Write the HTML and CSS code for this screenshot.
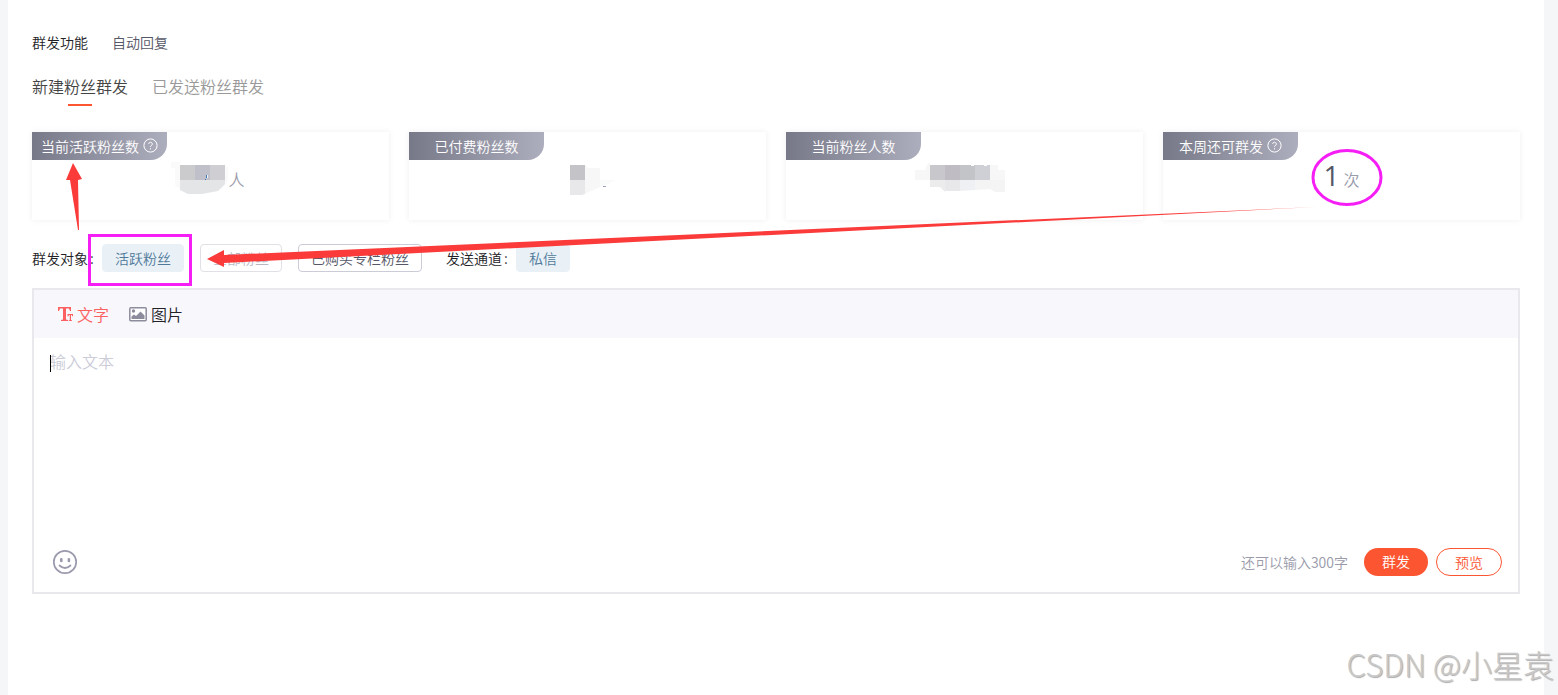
FILE: index.html
```html
<!DOCTYPE html>
<html lang="zh-CN">
<head>
<meta charset="utf-8">
<title>群发功能</title>
<link rel="stylesheet" href="styles.css">
</head>
<body>
<main class="page">
  <nav class="nav">
    <a class="nav-link nav-link-active" href="#">群发功能</a>
    <a class="nav-link" href="#">自动回复</a>
  </nav>
  <div class="tabs">
    <button class="tab tab-active" type="button">新建粉丝群发</button>
    <button class="tab" type="button">已发送粉丝群发</button>
  </div>

  <section class="cards">
    <article class="card">
      <h2 class="card-label">当前活跃粉丝数
        <svg class="help" viewBox="0 0 15 15"><circle cx="7.5" cy="7.5" r="6.6"/><path d="M5.7 6a1.800 1.800 0 1 1 2.700 1.600c-.7.4-.9.700-.9 1.300M7.500 10.200v1.200"/></svg>
      </h2>
      <p class="card-value">
        <svg class="mosaic" width="52" height="30" viewBox="0 0 52 30">
          <path fill="#fafafa" d="M-5-3H4V0H49l3 3v12l-6 9H4L-1 20V3h-4z"/>
          <path fill="#cbcbcd" d="M4 0h15v15H4z"/><path fill="#c0c0ca" d="M19 0h15v15H19z"/><path fill="#cfced3" d="M34 0h15v15H34z"/>
          <path fill="#e4e5e7" d="M4 15h45v4l-7 7-16 3H12l-8-4z"/>
          <path fill="#3f78b8" d="M30 10h1v3h-1zM29 14h1v1h-1z"/><path fill="#eef6fa" d="M31 10h1v3h-1z"/>
        </svg><span class="unit">人</span>
      </p>
    </article>
    <article class="card">
      <h2 class="card-label">已付费粉丝数</h2>
      <p class="card-value">
        <svg class="mosaic" width="36" height="30" viewBox="0 0 36 30">
          <path fill="#c4c3c8" d="M0 0h15v15H0z"/><path fill="#e8e8ea" d="M0 15h15v14l-3 1H0z"/>
          <path fill="#f7f7f7" d="M15 0l3 3h12v19l-15 7z"/><path fill="#f9fbfb" d="M30 15h15l-7 4-8 3z"/>
          <path fill="#9a9dc0" d="M33 21h3v1h-3z"/>
        </svg>
      </p>
    </article>
    <article class="card">
      <h2 class="card-label">当前粉丝人数</h2>
      <p class="card-value">
        <svg class="mosaic" width="100" height="30" viewBox="0 0 100 30">
          <path fill="#f7f7f7" d="M0 5h10l3-7h2v17H0zM75 0h8v5h7v10H75z"/>
          <path fill="#c8c7cc" d="M15 0h15v15H15z"/><path fill="#bfbdc3" d="M30 0h15v15H30z"/><path fill="#c3c4c8" d="M45 0h15v15H45z"/><path fill="#cfd0d6" d="M60 0h15v15H60z"/>
          <path fill="#ececec" d="M15 15h15v12l-5-5H15z"/><path fill="#e8e8ea" d="M30 15h15v11H30z"/><path fill="#eff0f3" d="M45 15h15v10l-15 1z"/><path fill="#f4f4f5" d="M60 15h30v12H80l-5-3-15 1z"/>
          <path fill="#fff" d="M56 0h3v1h-3zM69 0h3v1h-3z"/>
        </svg>
      </p>
    </article>
    <article class="card">
      <h2 class="card-label">本周还可群发
        <svg class="help" viewBox="0 0 15 15"><circle cx="7.5" cy="7.5" r="6.6"/><path d="M5.7 6a1.800 1.800 0 1 1 2.700 1.600c-.7.4-.9.700-.9 1.300M7.500 10.200v1.200"/></svg>
      </h2>
      <p class="card-value"><span class="number">1</span><span class="unit">次</span></p>
    </article>
  </section>

  <section class="filters">
    <span class="filter-label">群发对象<span class="colon">:</span></span>
    <div class="chips">
      <button class="chip chip-active" type="button">活跃粉丝</button>
      <button class="chip chip-disabled" type="button" disabled>全部粉丝</button>
      <button class="chip" type="button">已购买专栏粉丝</button>
    </div>
    <span class="filter-label channel-label">发送通道<span class="colon">:</span></span>
    <button class="chip chip-active" type="button">私信</button>
  </section>

  <section class="editor">
    <div class="toolbar">
      <button class="tool tool-active" type="button">
        <svg width="16" height="16" viewBox="0 0 16 16"><path fill="currentColor" d="M0 1h13v4h-1l-1-2.500H8V13.500l2 .5v1H3v-1l2-.5V2.500H2L1 5H0zM9.500 8H15v2.300h-.7L13.700 9H13v5l1 .2v.8h-3.200v-.8l1-.2V9h-.8l-.6 1.300h-.9z"/></svg>
        <span class="tool-text">文字</span>
      </button>
      <button class="tool" type="button">
        <svg width="18" height="15" viewBox="0 0 18 15"><rect x=".8" y=".8" width="16.400" height="13" rx="1" fill="#fff" stroke="#8c8c9c" stroke-width="1.500"/><circle cx="4.500" cy="4" r="1.700" fill="#8c8c9c"/><path fill="#8c8c9c" d="M2.500 12V9.500L5 7.500l2 1.500 4.500-4.500 4 4V12z"/></svg>
        <span class="tool-text">图片</span>
      </button>
    </div>
    <div class="entry">
      <textarea class="input" placeholder="输入文本" aria-label="输入文本"></textarea>
      <span class="caret"></span>
    </div>
    <div class="footer">
      <button class="emoji" type="button" aria-label="表情">
        <svg width="26" height="26" viewBox="0 0 26 26" fill="none" stroke="#9a9aad" stroke-linecap="round"><circle cx="13" cy="13" r="11.200" stroke-width="1.700"/><path stroke-width="2.600" d="M9.300 10.200v1.800M16.900 10.200v1.800"/><path stroke-width="1.700" d="M7.500 16.500q5.500 5 11 0"/></svg>
      </button>
      <span class="remaining">还可以输入300字</span>
      <button class="action action-primary" type="button">群发</button>
      <button class="action action-outline" type="button">预览</button>
    </div>
  </section>
</main>

<svg class="notes" width="1558" height="695" viewBox="0 0 1558 695" aria-hidden="true">
  <path fill="#fb3a3a" d="M73 163l9 16-4 1 1 50h-1l-8-50-4 0z"/>
  <path fill="#fb3a3a" d="M207 259l17-9v5L1316 207 224 263v4z"/>
  <rect x="89.500" y="235.500" width="101" height="49" fill="none" stroke="#f51ef5" stroke-width="3"/>
  <ellipse cx="1347" cy="177.500" rx="34" ry="27" fill="none" stroke="#f51ef5" stroke-width="3"/>
</svg>
<div class="watermark">CSDN @小星袁</div>
</body>
</html>
```
FILE: styles.css
```css
* { box-sizing: border-box; }
body {
  position: relative;
  min-height: 100vh;
  margin: 0;
  padding: 0 14px 0 8px;
  background: #f5f6f7;
  color: #222226;
  font: 350 14px/20px "Noto Sans CJK SC", sans-serif;
}
button, textarea { font: inherit; }
button { border: 0; padding: 0; background: none; color: inherit; }
h2, p { margin: 0; font-weight: inherit; }
svg { flex: none; }

.page { min-height: 100vh; padding: 32px 24px; background: #fff; }
.nav { display: flex; gap: 24px; }
.nav-link { color: #555666; text-decoration: none; }
.nav-link-active { color: #222226; }

.tabs { display: flex; gap: 24px; margin-top: 22px; }
.tab {
  display: flex;
  flex-direction: column;
  align-items: center;
  gap: 6px;
  color: #999;
  font-size: 16px;
  line-height: 24px;
}
.tab::after { width: 24px; height: 2px; content: ""; }
.tab-active { color: #444; }
.tab-active::after { background: #fc5531; }

.cards { display: grid; grid-template-columns: repeat(4, 1fr); gap: 20px; margin-top: 26px; }
.card { height: 88px; box-shadow: 0 0 6px rgba(0, 0, 0, 0.07); }
.card-label {
  display: flex;
  align-items: center;
  justify-content: center;
  gap: 4px;
  width: 135px;
  height: 28px;
  padding-bottom: 1px;
  border-bottom-right-radius: 16px;
  background: linear-gradient(90deg, #777888, #adaebd);
  color: #fff;
  font-size: 14px;
}
.help { width: 15px; height: 15px; fill: none; stroke: #fff; stroke-width: 1; }
.card-value { display: flex; justify-content: center; height: 40px; padding-top: 5px; line-height: 28px; }
.mosaic { overflow: visible; }
.number { margin-right: 4px; color: #555666; font-family: "Open Sans", sans-serif; font-size: 28px; font-weight: 400; line-height: 20px; }
.unit { color: #999aaa; font-size: 16px; }

.filters { display: flex; align-items: center; margin-top: 24px; }
.filter-label { width: 70px; white-space: nowrap; }
.colon { padding-left: 2px; }
.channel-label { margin-left: 24px; }
.chips { display: flex; gap: 16px; }
.chip {
  height: 28px;
  padding: 0 12px;
  border: 1px solid #ccccd8;
  border-radius: 4px;
  color: #555666;
}
.chip-active { border-color: #e9f1f7; background: #e9f1f7; color: #507999; }
.chip-disabled { border-color: #e0e0e6; color: #b8b8c4; }

.editor { margin-top: 16px; border: 2px solid #e8e8ed; }
.toolbar {
  display: flex;
  align-items: center;
  gap: 20px;
  height: 48px;
  padding: 0 24px;
  background: #f7f7fc;
  font-size: 16px;
}
.tool { display: flex; align-items: center; gap: 4px; line-height: 24px; }
.tool-active { gap: 3px; color: #fc6060; }
.entry { position: relative; height: 194px; padding: 11px 16px; }
.input {
  display: block;
  width: 100%;
  height: 100%;
  padding: 0;
  border: 0;
  outline: 0;
  resize: none;
  color: #222226;
  font-size: 16px;
  line-height: 24px;
}
.input::placeholder { color: #ccccd8; }
.caret { position: absolute; top: 17px; left: 16px; width: 1px; height: 17px; background: #000; }
.footer { display: flex; align-items: center; height: 60px; padding: 0 16px 0 18px; }
.emoji { display: flex; }
.remaining { margin-left: auto; margin-right: 16px; color: #999aaa; }
.action { height: 28px; border-radius: 14px; }
.action-primary { width: 64px; padding-bottom: 2px; background: #fc5531; color: #fff; }
.action-outline { width: 66px; margin-left: 8px; border: 1px solid #fc5531; color: #fc5531; }

.notes { position: absolute; top: 0; left: 0; pointer-events: none; }
.watermark {
  position: absolute;
  right: 4px;
  bottom: 11px;
  color: #c8c8c8;
  font-size: 31px;
  font-weight: 300;
  line-height: 40px;
  text-shadow: 1px 1px 1px #aaa, -1px -1px 0 #fff;
}
```
